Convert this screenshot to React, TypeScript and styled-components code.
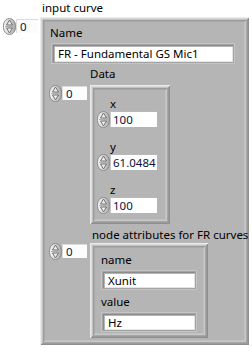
import styled, { createGlobalStyle } from "styled-components";

const GlobalStyle = createGlobalStyle`
  html, body {
    margin: 0;
    padding: 0;
    background: #ffffff;
  }
  body {
    font-family: "Noto Sans", "Open Sans", sans-serif;
    font-size: 11.5px;
    color: #000;
  }
`;

const Panel = styled.div`
  width: 252px;
  height: 351px;
  overflow: hidden;
  box-sizing: border-box;
  padding: 1px 0 0 3px;
`;

const ArrayBlock = styled.div`
  display: flex;
  flex-direction: column;
`;

const Label = styled.div<{ $left?: number; $top?: number }>`
  height: 14px;
  line-height: 14px;
  white-space: nowrap;
  margin-left: ${(p) => p.$left || 0}px;
  margin-top: ${(p) => p.$top || 0}px;
`;

const ArrayRow = styled.div<{ $gap: number; $top?: number }>`
  display: flex;
  align-items: flex-start;
  column-gap: ${(p) => p.$gap}px;
  margin-top: ${(p) => p.$top || 0}px;
`;

const Numeric = styled.div<{ $top?: number }>`
  display: flex;
  align-items: flex-start;
  margin-top: ${(p) => p.$top || 0}px;
`;

const IndexBox = styled.div<{ $width: number }>`
  width: ${(p) => p.$width}px;
  height: 14px;
  margin-top: 1px;
  padding-left: 3px;
  box-sizing: border-box;
  line-height: 14px;
  background: #fcfcfc;
  color: #10103a;
  border-top: 1px solid #dcdcdc;
  border-left: 1px solid #dcdcdc;
`;

const NumBox = styled.div<{ $width: number }>`
  width: ${(p) => p.$width}px;
  height: 16px;
  padding-left: 2px;
  box-sizing: border-box;
  line-height: 15px;
  background: #ffffff;
  color: #10103a;
  border-top: 1px solid #b8b8b8;
  border-left: 1px solid #c8c8c8;
`;

const StringBox = styled.div<{ $width: number; $height: number; $left?: number; $top?: number }>`
  width: ${(p) => p.$width}px;
  height: ${(p) => p.$height}px;
  margin-left: ${(p) => p.$left || 0}px;
  margin-top: ${(p) => p.$top || 0}px;
  box-sizing: border-box;
  padding: 2px 0 0 5px;
  line-height: 14px;
  background: #ffffff;
  white-space: nowrap;
  overflow: hidden;
  box-shadow: inset 1px 1px 0 #8c8c8c, inset 2px 2px 0 #b4b4b4, inset -1px -1px 0 #e4e4e4,
    0 0 0 1px #a4a4a4, 0 0 0 2px #c4c4c4;
`;

const Cluster = styled.div<{ $width: number; $pad: string }>`
  width: ${(p) => p.$width}px;
  box-sizing: border-box;
  padding: ${(p) => p.$pad};
  display: flex;
  flex-direction: column;
  background: #b5b5b5;
  box-shadow: inset 1px 1px 0 #ececec, inset -1px -1px 0 #8e8e8e, inset 2px 2px 0 #d8d8d8,
    inset -2px -2px 0 #9a9a9a, inset 3px 3px 0 #c4c4c4, inset -3px -3px 0 #a6a6a6,
    inset 4px 4px 0 #9c9c9c, inset -4px -4px 0 #c8c8c8, inset 5px 5px 0 #a8a8a8,
    inset -5px -5px 0 #c0c0c0;
`;

const Spinner = () => (
  <svg width="13" height="17" viewBox="0 0 13 17">
    <defs>
      <linearGradient id="spin" x1="0" y1="0" x2="1" y2="0">
        <stop offset="0" stopColor="#f6f6f6" />
        <stop offset="0.55" stopColor="#d6d6d6" />
        <stop offset="1" stopColor="#a4a4a4" />
      </linearGradient>
    </defs>
    <rect x="0.5" y="0.5" width="12" height="16" rx="6" ry="7" fill="url(#spin)" stroke="#8a8a8a" />
    <line x1="2" y1="8.5" x2="11" y2="8.5" stroke="#b0b0b0" />
    <polygon points="6.5,2 3.5,7 9.5,7" fill="#ececec" stroke="#666666" strokeWidth="0.9" />
    <polygon points="3.5,10 9.5,10 6.5,15" fill="#ececec" stroke="#666666" strokeWidth="0.9" />
  </svg>
);

const NumericField = ({ label, value, top }: { label: string; value: string; top?: number }) => (
  <>
    <Label $left={13} $top={top}>
      {label}
    </Label>
    <Numeric>
      <Spinner />
      <NumBox $width={47}>{value}</NumBox>
    </Numeric>
  </>
);

const App = () => {
  return (
    <>
      <GlobalStyle />
      <Panel>
        <ArrayBlock>
          <Label $left={39}>input curve</Label>
          <ArrayRow $gap={2} $top={2}>
            <Numeric $top={1}>
              <Spinner />
              <IndexBox $width={22}>0</IndexBox>
            </Numeric>
            <Cluster $width={209} $pad="9px 0 7px 9px">
              <Label $left={1}>Name</Label>
              <StringBox $width={180} $height={17} $left={4} $top={5}>
                FR - Fundamental GS Mic1
              </StringBox>
              <ArrayBlock>
                <Label $left={41} $top={5}>
                  Data
                </Label>
                <ArrayRow $gap={3} $top={4}>
                  <Numeric>
                    <Spinner />
                    <IndexBox $width={25}>0</IndexBox>
                  </Numeric>
                  <Cluster $width={80} $pad="12px 0 10px 7px">
                    <NumericField label="x" value="100" />
                    <NumericField label="y" value="61.0484" top={12} />
                    <NumericField label="z" value="100" top={12} />
                  </Cluster>
                </ArrayRow>
              </ArrayBlock>
              <ArrayBlock>
                <Label $left={43} $top={4}>
                  node attributes for FR curves
                </Label>
                <ArrayRow $gap={3} $top={1}>
                  <Numeric>
                    <Spinner />
                    <IndexBox $width={25}>0</IndexBox>
                  </Numeric>
                  <Cluster $width={118} $pad="10px 0 8px 11px">
                    <Label>name</Label>
                    <StringBox $width={92} $height={16} $left={2} $top={5}>
                      Xunit
                    </StringBox>
                    <Label $top={7}>value</Label>
                    <StringBox $width={92} $height={16} $left={2} $top={5}>
                      Hz
                    </StringBox>
                  </Cluster>
                </ArrayRow>
              </ArrayBlock>
            </Cluster>
          </ArrayRow>
        </ArrayBlock>
      </Panel>
    </>
  );
};

export default App;
